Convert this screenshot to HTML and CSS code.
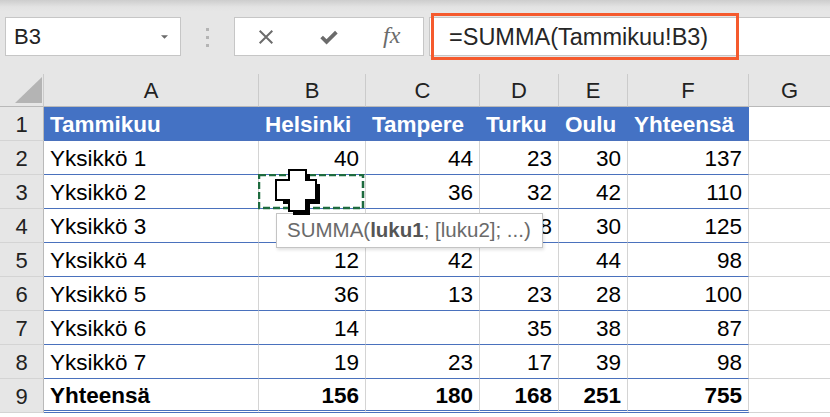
FILE: index.html
```html
<!DOCTYPE html>
<html lang="fi">
<head>
    <meta charset="UTF-8">
    <title>SUMMA</title>
    <link rel="stylesheet" href="styles.css">
</head>
<body>

    <div class="toolbar">
        <div class="name-box">
            <span>B3</span>
            <svg class="drop-arrow" viewBox="0 0 8 4"><path d="M0 0h8L4 4z"></path></svg>
        </div>
        <div class="grip"><i></i><i></i><i></i></div>
        <div class="fx-buttons">
            <span class="fx-btn">
                <svg viewBox="0 0 20 20"><path d="M3 3L17 17M17 3L3 17"></path></svg>
            </span>
            <span class="fx-btn">
                <svg viewBox="0 0 22 18"><path class="check" d="M2 9l6 6L20 3"></path></svg>
            </span>
            <span class="fx-btn fx-label">fx</span>
        </div>
        <div class="formula-bar">
            <div class="formula-text">=SUMMA(Tammikuu!B3)</div>
        </div>
    </div>

    <table class="sheet">
        <colgroup>
            <col style="width:44px">
            <col style="width:215px">
            <col style="width:107px">
            <col style="width:114px">
            <col style="width:79px">
            <col style="width:69px">
            <col style="width:121px">
            <col style="width:81px">
        </colgroup>
        <tr class="col-heads">
            <th class="corner"><span class="corner-tri"></span></th>
            <th>A</th><th>B</th><th>C</th><th>D</th><th>E</th><th>F</th><th>G</th>
        </tr>
        <tr class="table-head">
            <th class="row-num">1</th>
            <td>Tammikuu</td><td>Helsinki</td><td>Tampere</td><td>Turku</td><td>Oulu</td><td>Yhteensä</td>
            <td class="empty"></td>
        </tr>
        <tr>
            <th class="row-num">2</th>
            <td>Yksikkö 1</td><td class="num">40</td><td class="num">44</td><td class="num">23</td><td class="num">30</td><td class="num">137</td>
            <td class="empty"></td>
        </tr>
        <tr>
            <th class="row-num">3</th>
            <td>Yksikkö 2</td>
            <td class="num active-cell">
                <svg class="marching" viewBox="0 0 107 36" preserveAspectRatio="none"><rect x="1" y="1" width="104" height="33"></rect></svg>
                <svg class="cursor" viewBox="0 0 48 48">
                    <path class="cursor-shadow" d="M15 1h17v10h10v20H32v11H15V31H5V11h10z"></path>
                    <path class="cursor-body" d="M14 1h17v10h10v20H31v11H14V31H1V11h13z"></path>
                </svg>
                <div class="tooltip">SUMMA(<b>luku1</b>; [luku2]; ...)</div>
            </td>
            <td class="num">36</td><td class="num">32</td><td class="num">42</td><td class="num">110</td>
            <td class="empty"></td>
        </tr>
        <tr>
            <th class="row-num">4</th>
            <td>Yksikkö 3</td><td class="num"></td><td class="num"></td><td class="num">38</td><td class="num">30</td><td class="num">125</td>
            <td class="empty"></td>
        </tr>
        <tr>
            <th class="row-num">5</th>
            <td>Yksikkö 4</td><td class="num">12</td><td class="num">42</td><td class="num"></td><td class="num">44</td><td class="num">98</td>
            <td class="empty"></td>
        </tr>
        <tr>
            <th class="row-num">6</th>
            <td>Yksikkö 5</td><td class="num">36</td><td class="num">13</td><td class="num">23</td><td class="num">28</td><td class="num">100</td>
            <td class="empty"></td>
        </tr>
        <tr>
            <th class="row-num">7</th>
            <td>Yksikkö 6</td><td class="num">14</td><td class="num"></td><td class="num">35</td><td class="num">38</td><td class="num">87</td>
            <td class="empty"></td>
        </tr>
        <tr>
            <th class="row-num">8</th>
            <td>Yksikkö 7</td><td class="num">19</td><td class="num">23</td><td class="num">17</td><td class="num">39</td><td class="num">98</td>
            <td class="empty"></td>
        </tr>
        <tr class="total-row">
            <th class="row-num">9</th>
            <td>Yhteensä</td><td class="num">156</td><td class="num">180</td><td class="num">168</td><td class="num">251</td><td class="num">755</td>
            <td class="empty"></td>
        </tr>
    </table>

</body>
</html>
```

FILE: styles.css
```css
body, html {
    margin: 0;
    padding: 0;
    background: #ffffff;
    font-family: "Liberation Sans", Arial, sans-serif;
    overflow: hidden;
}

/* Formula bar strip */
.toolbar {
    display: flex;
    align-items: flex-start;
    height: 74px;
    padding: 17px 0 0 5px;
    box-sizing: border-box;
    background: linear-gradient(#cdcdcd 0, #e3e3e3 7px, #e6e6e6 12px);
    white-space: nowrap;
}

.name-box {
    display: flex;
    align-items: center;
    justify-content: space-between;
    width: 176px;
    height: 39px;
    padding: 0 12px 0 8px;
    box-sizing: border-box;
    background: #fff;
    border: 1px solid #c6c6c6;
    font-size: 22px;
    color: #222;
}

.drop-arrow {
    width: 7px;
    height: 4px;
    fill: #6b6b6b;
}

.grip {
    display: flex;
    flex-direction: column;
    gap: 5px;
    width: 53px;
    align-items: center;
    padding-top: 11px;
}

.grip i {
    display: block;
    width: 3px;
    height: 3px;
    background: #b4b4b4;
}

.fx-buttons {
    display: flex;
    width: 190px;
    height: 39px;
    box-sizing: border-box;
    background: #fff;
    border: 1px solid #c6c6c6;
}

.fx-btn {
    display: flex;
    align-items: center;
    justify-content: center;
    width: 63px;
}

.fx-btn svg {
    width: 18px;
    height: 18px;
    fill: none;
    stroke: #6b6b6b;
    stroke-width: 2.2;
}

.fx-btn svg .check {
    stroke-width: 4.5;
    stroke-linejoin: miter;
}

.fx-label {
    font-family: "Liberation Serif", "Times New Roman", serif;
    font-style: italic;
    font-size: 24px;
    color: #6b6b6b;
    padding-bottom: 3px;
    box-sizing: border-box;
}

.formula-bar {
    flex: 1;
    height: 39px;
    margin-left: 5px;
    box-sizing: border-box;
    background: #fff;
    border: 1px solid #c6c6c6;
    border-right: none;
}

.formula-text {
    width: 308px;
    height: 47px;
    margin: -5px 0 0 1px;
    padding-left: 15px;
    box-sizing: border-box;
    border: 3px solid #f55a2d;
    font-size: 23.5px;
    line-height: 42px;
    color: #262626;
}

/* Grid */
.sheet {
    table-layout: fixed;
    width: 830px;
    border-collapse: separate;
    border-spacing: 0;
    font-size: 22.5px;
    color: #000;
}

.sheet td, .sheet th {
    padding: 3px 6px 0;
    border-right: 1px solid #d4d4d4;
    border-bottom: 1px solid #4a71bd;
    white-space: nowrap;
    text-align: left;
    font-weight: normal;
    line-height: 1;
}

.sheet tr {
    height: 34px;
}

.col-heads {
    height: 33px !important;
}

.col-heads th {
    background: #e6e6e6;
    text-align: center;
    color: #222;
    font-size: 22px;
    padding-top: 1px;
    border-right: 1px solid #cbcbcb;
    border-bottom: 1px solid #b9b9b9;
}

.col-heads th:last-child {
    border-right: none;
}

.corner {
    position: relative;
}

.corner-tri {
    position: absolute;
    left: 15px;
    bottom: 3px;
    width: 0;
    height: 0;
    border-style: solid;
    border-width: 0 0 26px 27px;
    border-color: transparent transparent #b4b4b4 transparent;
}

.sheet .row-num {
    background: #e6e6e6;
    text-align: center;
    color: #222;
    font-size: 22px;
    border-right: 1px solid #b9b9b9;
    border-bottom: 1px solid #d4d4d4;
}

.table-head td {
    background: #4472c4;
    color: #fff;
    font-weight: bold;
    border-right-color: #4472c4;
}

.sheet .empty {
    background: #fff;
    border-right: none;
    border-bottom: 1px solid #d4d4d4;
}

.num {
    text-align: right !important;
}

.total-row td {
    font-weight: bold;
    border-bottom: 3px double #4a71bd;
}

.total-row .empty {
    font-weight: normal;
}

/* Active cell with copy marquee, cursor and function hint */
.active-cell {
    position: relative;
}

.marching {
    position: absolute;
    left: -1px;
    top: -1px;
    width: 107px;
    height: 36px;
    fill: none;
    stroke: #1e6b3f;
    stroke-width: 2.5;
    stroke-dasharray: 7 3;
}

.cursor {
    position: absolute;
    left: 16px;
    top: -6px;
    width: 48px;
    height: 48px;
    z-index: 3;
}

.cursor-shadow {
    fill: #000;
    transform: translate(3px, 4px);
}

.cursor-body {
    fill: #fff;
    stroke: #000;
    stroke-width: 2;
}

.tooltip {
    position: absolute;
    left: 17px;
    top: 38px;
    width: 267px;
    height: 35px;
    padding-left: 10px;
    box-sizing: border-box;
    background: #fff;
    border: 1px solid #c4c4c4;
    box-shadow: 1px 2px 3px rgba(0, 0, 0, 0.12);
    font-size: 20.5px;
    font-weight: normal;
    line-height: 32px;
    color: #6a6a6a;
    text-align: left;
    z-index: 2;
}

.tooltip b {
    color: #555;
}
```
